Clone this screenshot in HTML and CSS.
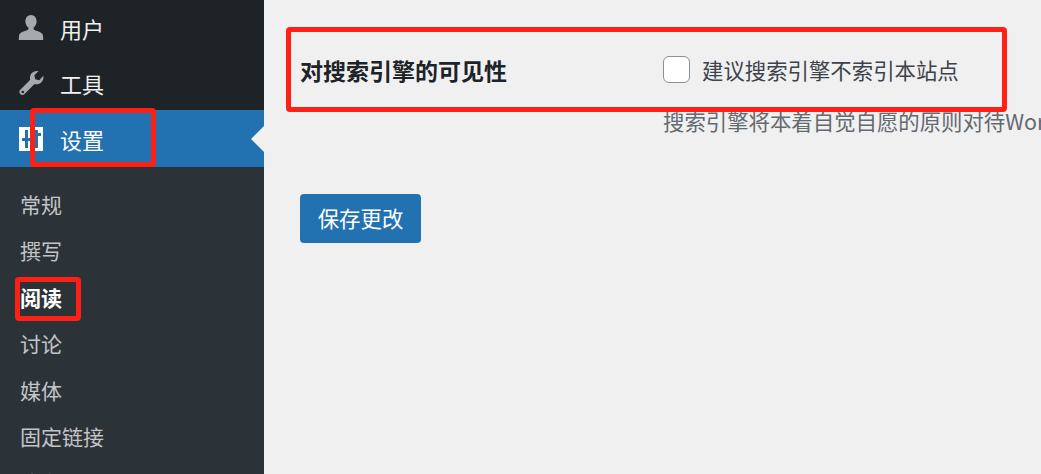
FILE: index.html
```html
<!DOCTYPE html>
<html lang="zh-CN">
<head>
    <meta charset="UTF-8">
    <title>阅读设置</title>
    <link rel="stylesheet" href="styles.css">
</head>
<body>
    <div class="page">
        <div class="sidebar">
            <a class="menu-item">
                <svg class="menu-icon" viewBox="0 0 26 26"><path d="M13 0c3.400 0 5.600 2.900 5.600 6.300 0 2.700-1.300 5-3 6.300v1.500c0 .8 1.300 1.300 3.400 2 3 1 5.800 2.200 6 4.400l.2 4.500H.8l.2-4.500c.2-2.200 3-3.400 6-4.400 2.100-.7 3.400-1.200 3.400-2v-1.500c-1.700-1.300-3-3.600-3-6.300C7.400 2.900 9.600 0 13 0z"/></svg>
                <span>用户</span>
            </a>
            <a class="menu-item">
                <svg class="menu-icon" viewBox="0 0 28 28"><path d="M27.300 6.200c.5 2.700-.3 5.300-2.300 7.200-2 1.800-4.700 2.400-7.200 1.600L7 25.800c-1.300 1.400-3.300 1.400-4.600.1-1.300-1.300-1.300-3.300.1-4.600L13.200 10.500c-.8-2.500-.2-5.200 1.700-7.200C16.800 1.300 19.400.6 22.100 1.100l-4.500 4.600 1 4.300 4.300 1.100zM5.100 22.300a1.400 1.400 0 1 0 0 2.800 1.400 1.400 0 0 0 0-2.800z"/></svg>
                <span>工具</span>
            </a>
            <a class="menu-item active">
                <svg class="menu-icon" viewBox="0 0 26 26"><path fill-rule="evenodd" d="M1 1h24v24H1zM7 4v8H4v3h3v7h3v-7h3v-3h-3V4zM17 4v3h-3v3h3v12h3V10h3V7h-3V4z"/></svg>
                <span>设置</span>
            </a>
            <div class="submenu">
                <a>常规</a>
                <a>撰写</a>
                <a class="current">阅读</a>
                <a>讨论</a>
                <a>媒体</a>
                <a>固定链接</a>
                <a>隐私</a>
            </div>
        </div>

        <div class="content">
            <div class="field-row">
                <div class="field-label">对搜索引擎的可见性</div>
                <div class="field-value">
                    <label class="check-label"><span class="checkbox"></span>建议搜索引擎不索引本站点</label>
                    <p class="description">搜索引擎将本着自觉自愿的原则对待WordPress提出的请求。</p>
                </div>
            </div>
            <a class="save-button">保存更改</a>
        </div>

        <!-- red boxes drawn over the screenshot -->
        <div class="mark mark-field"></div>
        <div class="mark mark-settings"></div>
        <div class="mark mark-reading"></div>
    </div>
</body>
</html>
```

FILE: styles.css
```css
html, body {
    margin: 0;
    height: 100%;
    overflow: hidden;
}
body {
    background-color: #f0f0f1;
    font-family: "Noto Sans CJK SC", "Liberation Sans", sans-serif;
}
.page {
    position: relative;
    display: flex;
    width: 1041px;
    height: 474px;
    overflow: hidden;
}
.sidebar {
    width: 264px;
    flex-shrink: 0;
    background-color: #1d2327;
}
.menu-item {
    display: flex;
    align-items: center;
    position: relative;
    height: 55px;
    padding-left: 18px;
    color: #f0f0f1;
    font-size: 22px;
}
.menu-item span {
    margin-left: 16px;
}
.menu-icon {
    width: 26px;
    height: 26px;
    fill: #a7aaad;
}
.menu-item.active {
    height: 57px;
    background-color: #2271b1;
    color: #fff;
}
.menu-item.active .menu-icon {
    fill: #fff;
}
.menu-item.active::after {
    content: "";
    position: absolute;
    right: 0;
    top: 16px;
    border: 13px solid transparent;
    border-right-color: #f0f0f1;
    border-left-width: 0;
}
.submenu {
    display: flex;
    flex-direction: column;
    height: 307px;
    padding-top: 14px;
    box-sizing: border-box;
    background-color: #2c3338;
}
.submenu a {
    flex-shrink: 0;
    height: 46.4px;
    line-height: 46px;
    padding-left: 20px;
    color: #c3c4c7;
    font-size: 21px;
}
.submenu a.current {
    color: #fff;
    font-weight: 700;
}
.content {
    flex: 1;
    min-width: 0;
    padding: 53px 0 0 36px;
    color: #3c434a;
    font-size: 21.4px;
}
.field-row {
    display: flex;
    height: 141px;
}
.field-label {
    width: 363px;
    flex-shrink: 0;
    color: #1d2327;
    font-size: 23px;
    font-weight: 700;
    line-height: 34px;
}
.field-value {
    white-space: nowrap;
}
.check-label {
    display: flex;
    align-items: center;
    height: 32px;
}
.checkbox {
    width: 25px;
    height: 25px;
    margin-right: 12px;
    background-color: #fff;
    border: 1px solid #8c8f94;
    border-radius: 6px;
}
.description {
    margin: 20px 0 0;
    color: #646970;
    line-height: 32px;
}
.save-button {
    display: block;
    width: 121px;
    height: 49px;
    line-height: 47px;
    text-align: center;
    border-radius: 4px;
    background-color: #2271b1;
    color: #fff;
}
.mark {
    position: absolute;
    box-sizing: border-box;
    border: 5px solid #ff2015;
    border-radius: 4px;
}
.mark-field {
    left: 286px;
    top: 27px;
    width: 721px;
    height: 85px;
}
.mark-settings {
    left: 30px;
    top: 108px;
    width: 126px;
    height: 59px;
}
.mark-reading {
    left: 15px;
    top: 277px;
    width: 66px;
    height: 44px;
}
```
